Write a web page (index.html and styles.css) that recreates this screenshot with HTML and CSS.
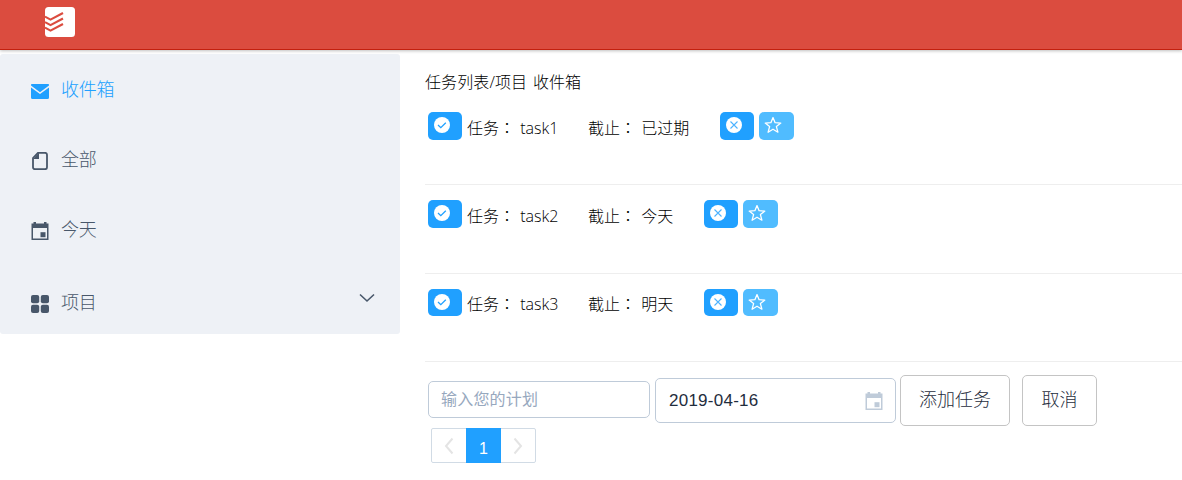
FILE: index.html
```
<!DOCTYPE html>
<html lang="zh-CN">
<head>
<meta charset="utf-8">
<title>任务列表</title>
<link rel="stylesheet" href="styles.css">
</head>
<body>
<svg class="defs" width="0" height="0">
  <symbol id="calendar" viewBox="0 0 18 18"><path fill-rule="evenodd" d="M2.500 0H5v1.500H13V0h2.500v1.500H17.500V18H.5V1.500h2zM2 6v10.500h14V6z"/><path d="M9.500 10.200h5v5h-5z"/></symbol>
  <symbol id="check" viewBox="0 0 16 16"><circle cx="8" cy="8" r="8" fill="#fff"/><path d="M4 8l2.800 2.700 5-5" fill="none" stroke="#20a0ff" stroke-width="1.300"/></symbol>
  <symbol id="cross" viewBox="0 0 16 16"><circle cx="8" cy="8" r="8" fill="#fff"/><path d="M4.500 4.500l7 7m0-7l-7 7" fill="none" stroke="#4db3ff" stroke-width="1.100"/></symbol>
  <symbol id="star" viewBox="0 0 18 18"><path d="M9 1.600l2.100 5.100 5.700.4-4.400 3.500 1.500 5.600L9 13.200l-4.900 3 1.500-5.600L1.200 7.100l5.700-.4z" fill="none" stroke="#fff" stroke-width="1.300" stroke-linejoin="round"/></symbol>
</svg>
<header class="topbar">
  <svg class="logo" width="30" height="30" viewBox="0 0 30 30"><rect width="30" height="30" rx="3.500" fill="#fff"/><path d="M0 9.600l5.500 3L18 6M0 15.100l5.500 3L18 11.500M0 20.600l5.500 3L18 17" fill="none" stroke="#db4c3f" stroke-width="2.200"/></svg>
</header>
<div class="page">
  <nav class="sidebar">
    <a class="item active"><svg width="18" height="18" viewBox="0 0 18 18"><path d="M0 1.500Q0 1 1 1h16q1 0 1 .5v1L9 9.300 0 2.500zM0 4.600l9 6.300 9-6.300V14.500q0 1.500-1.500 1.500h-15Q0 16 0 14.500z"/></svg><span>收件箱</span></a>
    <a class="item"><svg width="18" height="18" viewBox="0 0 18 18"><path d="M7 .8h7q2 0 2 2v12.400q0 2-2 2H4q-2 0-2-2V6z" fill="none" stroke="currentColor" stroke-width="1.800"/><path d="M8 .5V7H2z"/></svg><span>全部</span></a>
    <a class="item"><svg width="18" height="18"><use href="#calendar"/></svg><span>今天</span></a>
    <a class="item projects"><svg width="18" height="18" viewBox="0 0 18 18"><rect width="8.200" height="8.200" rx="2"/><rect x="9.800" width="8.200" height="8.200" rx="2"/><rect y="9.800" width="8.200" height="8.200" rx="2"/><rect x="9.800" y="9.800" width="8.200" height="8.200" rx="2"/></svg><span>项目</span><svg class="arrow" width="16" height="10" viewBox="0 0 16 10"><path d="M1 1.500l7 6.500 7-6.500" fill="none" stroke="currentColor" stroke-width="1.600"/></svg></a>
  </nav>
  <main class="content">
    <div class="title">任务列表/项目 收件箱</div>
    <section class="task">
      <button class="btn"><svg width="16" height="16"><use href="#check"/></svg></button>
      <span class="name">任务<i lang="zh-TW">：</i> task1</span><span class="due">截止<i lang="zh-TW">：</i> 已过期</span>
      <button class="btn"><svg width="16" height="16"><use href="#cross"/></svg></button>
      <button class="btn light"><svg width="18" height="18"><use href="#star"/></svg></button>
    </section>
    <section class="task">
      <button class="btn"><svg width="16" height="16"><use href="#check"/></svg></button>
      <span class="name">任务<i lang="zh-TW">：</i> task2</span><span class="due">截止<i lang="zh-TW">：</i> 今天</span>
      <button class="btn"><svg width="16" height="16"><use href="#cross"/></svg></button>
      <button class="btn light"><svg width="18" height="18"><use href="#star"/></svg></button>
    </section>
    <section class="task">
      <button class="btn"><svg width="16" height="16"><use href="#check"/></svg></button>
      <span class="name">任务<i lang="zh-TW">：</i> task3</span><span class="due">截止<i lang="zh-TW">：</i> 明天</span>
      <button class="btn"><svg width="16" height="16"><use href="#cross"/></svg></button>
      <button class="btn light"><svg width="18" height="18"><use href="#star"/></svg></button>
    </section>
    <form class="form">
      <input class="plan" placeholder="输入您的计划">
      <div class="date"><span>2019-04-16</span><svg width="18" height="18"><use href="#calendar"/></svg></div>
      <button type="button" class="plain add">添加任务</button>
      <button type="button" class="plain cancel">取消</button>
    </form>
    <div class="pager">
      <span><svg width="12" height="18" viewBox="0 0 12 18"><path d="M9.500 1.500L3 9l6.500 7.500"/></svg></span>
      <span class="current">1</span>
      <span><svg width="12" height="18" viewBox="0 0 12 18"><path d="M2.500 1.500L9 9l-6.500 7.500"/></svg></span>
    </div>
  </main>
</div>
</body>
</html>
```
FILE: styles.css
```
* { box-sizing: border-box; }
body { margin: 0; height: 480px; overflow: hidden; background: #fff; color: #000; font: 300 16px/24px "Open Sans", "Noto Sans CJK SC", sans-serif; }
svg { display: block; flex: none; fill: currentColor; }
.defs { position: absolute; }
button { font: inherit; margin: 0; padding: 0; }
.topbar { height: 50px; padding: 7px 0 0 45px; background: #db4c3f; border-bottom: 1px solid #c3200e; box-shadow: 0 1px 3px rgba(0, 0, 0, .25); }
.page { display: flex; align-items: flex-start; padding-top: 4px; }
.sidebar { width: 400px; height: 280px; background: #eef1f6; border-radius: 3px; }
.item { display: flex; align-items: center; height: 70px; padding: 4px 25px 0 31px; color: #48576a; font-size: 18px; }
.item span { margin: -4px 0 0 12px; letter-spacing: -.2px; }
.item.active { color: #20a0ff; }
.item.active svg { margin-top: 2px; }
.projects { padding-top: 10px; }
.projects span { margin-top: -4px; }
.arrow { margin: -13px 0 0 auto; }
.content { width: 782px; padding: 16px 0 0 25px; }
.title { height: 24px; word-spacing: 1.500px; letter-spacing: .1px; }
.task { display: flex; align-items: flex-start; height: 88.500px; padding: 15px 0 0 3px; border-bottom: 1px solid #eee; }
.title + .task { height: 91px; padding-top: 18px; }
.task i { font-family: "Noto Sans CJK TC", sans-serif; font-style: normal; }
.btn { width: 34px; height: 27.500px; border: 0; border-radius: 5px; background: #20a0ff; padding: 0 0 0 6px; }
.btn svg { margin-top: -1px; }
.btn.light { width: 35px; margin-left: 5px; padding-left: 5px; background: #50bcff; }
.name, .due { white-space: nowrap; margin-top: 2.500px; word-spacing: 1px; }
.name { width: 121px; margin-left: 5px; }
.due { margin-right: 31px; }
.form { display: flex; align-items: center; margin: 13px 0 0; padding-left: 3px; height: 51px; }
.plan { width: 222px; height: 37px; margin: 0 5px 2px 0; padding: 0 12px 3px; border: 1px solid #bfcbd9; border-radius: 5px; font: 400 16px "Noto Sans CJK SC", sans-serif; letter-spacing: .2px; outline: 0; }
.plan::placeholder { color: #97a8be; opacity: 1; }
.date { display: flex; align-items: center; justify-content: space-between; width: 241px; height: 45px; margin-right: 4px; padding: 0 12px 0 13px; border: 1px solid #bfcbd9; border-radius: 5px; color: #1f2d3d; font: 400 17px "Liberation Sans", sans-serif; letter-spacing: .25px; }
.date svg { color: #bfcbd9; }
.plain { height: 51px; padding-bottom: 4px; border: 1px solid #c4c4c4; border-radius: 5px; background: #fff; color: #1f2d3d; font-size: 18px; }
.add { width: 110px; margin-right: 12px; }
.cancel { width: 75px; }
.pager { display: flex; width: 105px; height: 35px; margin: 2px 0 0 6px; border: 1px solid #d1dbe5; border-radius: 2px; }
.pager span { display: flex; flex: 1; align-items: center; justify-content: center; }
.pager path { fill: none; stroke: #e4e4e4; stroke-width: 2; }
.pager .current { flex: none; width: 35px; margin: -1px 0; padding-top: 6px; background: #20a0ff; color: #fff; font: 400 16px "Liberation Sans", sans-serif; }
```
